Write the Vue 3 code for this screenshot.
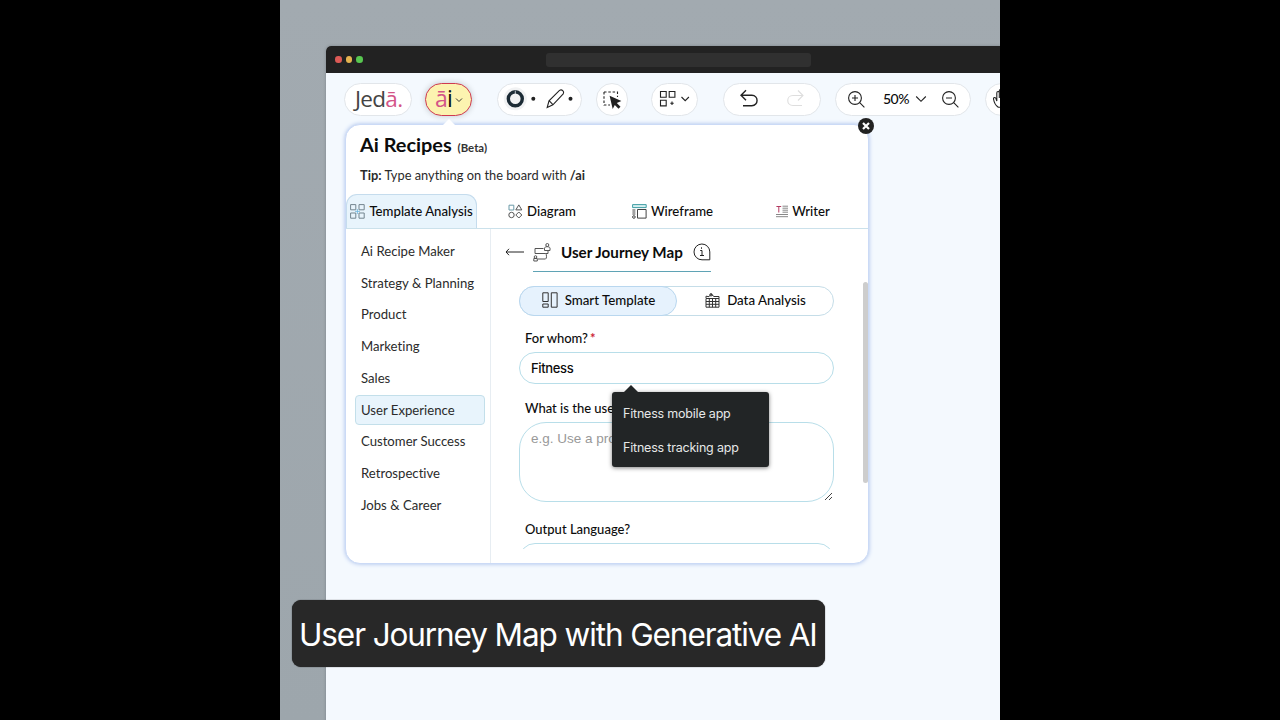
<template>
    <div class="page">
        <div class="stage">
            <div class="browser">
                <div class="title-bar">
                    <i class="dot red"></i><i class="dot yellow"></i><i class="dot green"></i>
                    <div class="address"></div>
                </div>

                <div class="toolbar">
                    <div class="pill jeda">Jed<b>ā.</b></div>
                    <div class="pill ai">
                        <span><b>ā</b>i</span>
                        <svg width="8" height="6" viewBox="0 0 8 6"><path d="M1 1.500l3 3 3-3" /></svg>
                    </div>
                    <div class="pill shapes">
                        <svg width="85" height="32" viewBox="0 0 85 32">
                            <circle cx="18.300" cy="15.800" r="11.500" fill="#f1f2f3" stroke="none" />
                            <circle cx="18.300" cy="15.800" r="7" stroke="#1c2b35" stroke-width="3.400" />
                            <path d="M18.300 7.500v3.500" stroke="#dfe5e8" stroke-width=".8" />
                            <circle cx="36.300" cy="15.800" r="2" fill="#222" stroke="none" />
                            <path d="M50.200 24.500l1.800-6.700L62.500 7.400c2.300-1.500 5.200 1 3.700 3.600L55.900 21.800zM52.100 17.700l3.800 4" stroke-width="1.100" />
                            <circle cx="73.500" cy="15.800" r="2" fill="#222" stroke="none" />
                        </svg>
                    </div>
                    <div class="pill select">
                        <svg width="32" height="32" viewBox="0 0 32 32">
                            <path d="M8 8h13.500v5M8 8v13h6" stroke-width="1.100" stroke-dasharray="2.500 1.800" />
                            <path d="M13.600 11.800l11.800 5.300-4.600 2 3.700 3.600-2 2-3.700-3.700-2.100 4z" fill="#222" stroke="none" />
                        </svg>
                    </div>
                    <div class="pill blocks">
                        <svg width="46" height="32" viewBox="0 0 46 32">
                            <path d="M9.500 8.500h5.700v5.700H9.500zM18.200 8.500h5.700v5.700h-5.700zM9.500 17.200h5.700v5.700H9.500zM19.300 20.300h3.400M21 18.600v3.400" />
                            <path d="M30.500 14l3.700 3.700 3.700-3.700" />
                        </svg>
                    </div>
                    <div class="pill history">
                        <svg width="98" height="32" viewBox="0 0 98 32">
                            <path d="M23 7.200l-5 5 5 5M18.300 12.200h10.500c7 0 7 10.500 0 10.500H20" stroke-width="1.400" />
                            <path d="M75 7.500l5 5-5 5M80 12.500h-10c-7 0-7 10 0 10h9" stroke="#dedede" />
                        </svg>
                    </div>
                    <div class="pill zoom">
                        <svg width="17" height="17" viewBox="0 0 17 17"><circle cx="7" cy="7" r="6.400" /><path d="M11.700 11.700l4.700 4.700M4 7h6M7 4v6" /></svg>
                        <span class="percent">50%</span>
                        <svg class="chev" width="12" height="8" viewBox="0 0 12 8"><path d="M1.200 1.500l4.800 4.800 4.800-4.800" /></svg>
                        <svg width="17" height="17" viewBox="0 0 17 17"><circle cx="7" cy="7" r="6.400" /><path d="M11.700 11.700l4.700 4.700M4 7h6" /></svg>
                    </div>
                    <div class="pill hand">
                        <svg width="24" height="20" viewBox="0 0 24 20"><path d="M5 18c-3-2-4-5-4.500-8 0-2 2.200-2 2.600 0l.7 2V4c0-2 2.500-2 2.500 0v5V2c0-2 2.500-2 2.500 0v7V3c0-2 2.500-2 2.500 0v8c3-2 4 0 2 3s-5 5-9 4z" /></svg>
                    </div>
                </div>

                <div class="panel">
                    <span class="pointer"></span>
                    <button class="close">
                        <svg width="16" height="16" viewBox="0 0 16 16"><path d="M5 5l6 6M11 5l-6 6" /></svg>
                    </button>

                    <div class="panel-head">
                        <h1>Ai Recipes <small>(Beta)</small></h1>
                        <p><b>Tip:</b> Type anything on the board with <b>/ai</b></p>
                    </div>

                    <div class="tabs">
                        <div class="tab active">
                            <svg width="15" height="15" viewBox="0 0 15 15" stroke="#73858f">
                                <path d="M.6.6h5.200v5.200H.6zM9 .6h5.200v5.200H9zM.6 9h5.200v5.200H.6zM9 9h5.200v5.200H9z" />
                                <path d="M7.400 5v5M5 7.400h5" stroke="#6fb6dc" stroke-width=".8" />
                            </svg>
                            <span>Template Analysis</span>
                        </div>
                        <div class="tab">
                            <svg width="15" height="15" viewBox="0 0 15 15" stroke="#555">
                                <path d="M1 1.200h4.800V6H1z" stroke="#6b9aa8" />
                                <path d="M10.800.9l3 5h-6z" />
                                <circle cx="3.500" cy="11" r="2.700" /><path d="M10.800 8l3 3-3 3-3-3z" stroke-linejoin="round" />
                            </svg>
                            <span>Diagram</span>
                        </div>
                        <div class="tab">
                            <svg width="15" height="15" viewBox="0 0 15 15" stroke="#444">
                                <path d="M.6.6h13.600v3H.6z" stroke="#3f9da4" fill="#d7f0f0" />
                                <path d="M5.500 5.500h8.600v8.600H5.500z" />
                                <path d="M.4 6h3M.4 8h3M.4 10h3" /><circle cx="1.900" cy="13" r="1.300" />
                            </svg>
                            <span>Wireframe</span>
                        </div>
                        <div class="tab">
                            <svg width="12" height="13" viewBox="0 0 12 13" stroke="#888">
                                <path d="M.4 1.500h4.800M2.800 1.500v6" stroke="#b33b61" />
                                <path d="M6.500 1.200H12M6.500 3.200H12M6.500 5.200H12M6.500 7.200H12M0 9.500h12M0 11.700h12" />
                            </svg>
                            <span>Writer</span>
                        </div>
                    </div>

                    <div class="panel-body">
                        <ul class="menu">
                            <li v-for="item in menu" :key="item" :class="{ selected: item === current }" @click="current = item">{{ item }}</li>
                        </ul>

                        <div class="content">
                            <div class="heading">
                                <svg class="back" width="20" height="8" viewBox="0 0 20 8"><path d="M4 .8L1 4l3 3.200M1 4h18" /></svg>
                                <div class="heading-title">
                                    <svg width="19" height="19" viewBox="0 0 19 19" stroke="#555">
                                        <path d="M10.500 5.500H2v5h10.500c1.200 0 1.500 5.500 0 5.500H5M12.500 10.500H15V8" />
                                        <circle cx="14.300" cy="2" r="1.500" /><path d="M11.500 7.500V5.200c0-2 5.500-2 5.500 0v2.300z" />
                                        <circle cx="2.500" cy="14" r="1.300" /><path d="M.8 18v-2.500h3.500V18z" />
                                    </svg>
                                    <strong>User Journey Map</strong>
                                    <svg class="info" width="18" height="18" viewBox="0 0 18 18">
                                        <path d="M16.800 16.800H9a7.900 7.900 0 1 1 7.800-7.900z" />
                                        <path d="M7.200 7.500H9v5M7 12.500h4M8.500 4.300v1.500" />
                                    </svg>
                                </div>
                            </div>

                            <div class="switch">
                                <div class="option on">
                                    <svg width="16" height="16" viewBox="0 0 16 16"><path d="M.8.8h5.400v8.700H.8zM.8 12h5.400v3.200H.8zM9.300.8h5.800v14.400H9.300z" /></svg>
                                    <span>Smart Template</span>
                                </div>
                                <div class="option">
                                    <svg width="15" height="15" viewBox="0 0 15 15"><path d="M1 5.500h13v8.700H1zM1 8.500h13M1 11.300h13M4.300 5.500v8.700M7.500 5.500v8.700M10.700 5.500v8.700M1 5V3.200l3 .5 2-2.500 3 2.300h5v2" /><circle cx="6" cy="1.800" r="1.200" /></svg>
                                    <span>Data Analysis</span>
                                </div>
                            </div>

                            <label>For whom?<em>*</em></label>
                            <div class="field">Fitness
                                <div class="suggestions">
                                    <div v-for="s in suggestions" :key="s">{{ s }}</div>
                                </div>
                            </div>
                            <label class="second">What is the user</label>
                            <div class="area">e.g. Use a prod
                                <svg width="9" height="9" viewBox="0 0 9 9"><path d="M1 8l7-7M5 8l3-3" /></svg>
                            </div>
                            <label class="third">Output Language?</label>
                            <div class="clip"><div class="field"></div></div>
                        </div>
                        <div class="scrollbar"></div>
                    </div>
                </div>
            </div>
            <div class="caption">User Journey Map with Generative AI</div>
        </div>
    </div>
</template>

<script setup>
import { ref } from 'vue'

const current = ref('User Experience')

const menu = [
    'Ai Recipe Maker',
    'Strategy & Planning',
    'Product',
    'Marketing',
    'Sales',
    'User Experience',
    'Customer Success',
    'Retrospective',
    'Jobs & Career'
]

const suggestions = ['Fitness mobile app', 'Fitness tracking app']
</script>

<style>
body {
    margin: 0;
    background: #000;
}
</style>

<style scoped>
* {
    box-sizing: border-box;
}

svg {
    display: block;
    flex: none;
    fill: none;
}

.page {
    height: 720px;
    display: flex;
    justify-content: center;
    background: #000;
    font-family: Lato, "Liberation Sans", sans-serif;
    font-variant-ligatures: none;
    color: #0c0c0c;
}

.stage {
    position: relative;
    width: 720px;
    height: 720px;
    padding: 46px 0 0 46px;
    overflow: hidden;
    background: linear-gradient(180deg, #a2aab0, #9da6ac);
}

.browser {
    width: 760px;
    height: 700px;
    background: #f4f9fe;
    border-radius: 5px 0 0 0;
    box-shadow: 0 0 3px rgba(50, 60, 70, 0.35);
}

.title-bar {
    height: 27px;
    display: flex;
    align-items: center;
    gap: 4.200px;
    padding-left: 9px;
    background: #222;
    border-radius: 5px 0 0 0;
}

.dot {
    width: 6.500px;
    height: 6.500px;
    border-radius: 50%;
}

.red { background: #dc5a56; }
.yellow { background: #e5b350; }
.green { background: #58c750; }

.address {
    width: 265px;
    height: 14px;
    margin-left: 179px;
    border-radius: 3px;
    background: #303030;
}

.toolbar {
    display: flex;
    padding: 10px 0 0 18px;
    height: 51px;
}

.pill {
    flex: none;
    display: flex;
    align-items: center;
    height: 33px;
    border: 1px solid #e2e6ea;
    border-radius: 17px;
    background: #fff;
}

.pill svg {
    position: relative;
    top: -0.500px;
    stroke: #222;
    stroke-width: 1.100;
}

.pill b {
    color: #d35488;
    font-weight: 400;
}

.jeda {
    width: 68px;
    padding: 0 0 2px 10px;
    font: 400 22.500px "Open Sans", sans-serif;
    letter-spacing: -0.700px;
    color: #444;
}

.ai {
    width: 47px;
    margin-left: 13px;
    padding: 0 0 3px 9px;
    border: 1.500px solid #cf3a50;
    background: #fcf3b0;
    font: 400 23px "Open Sans", sans-serif;
    letter-spacing: -0.700px;
    box-shadow: 0 0 6px rgba(0, 0, 0, 0.2);
}

.ai svg {
    margin: 5px 0 0 3px;
    stroke-width: 0.900;
}

.shapes { width: 85px; margin-left: 25px; }
.select { width: 32px; margin-left: 14px; }
.blocks { width: 47px; margin-left: 23px; }
.history { width: 98px; margin-left: 25px; }
.shapes svg, .select svg, .blocks svg, .history svg { margin-left: -1px; }
.select svg { margin-top: 1px; }

.zoom {
    width: 136px;
    margin-left: 14px;
    padding-left: 11.500px;
}

.percent {
    width: 27px;
    margin: -2px 0 0 18.500px;
    font-size: 14px;
    font-weight: 500;
    letter-spacing: -0.500px;
}

.chev {
    margin: 0 15px 0 5px;
}

.hand {
    width: 60px;
    margin-left: 14px;
    padding-left: 7px;
}

.panel {
    position: relative;
    width: 524px;
    height: 440px;
    margin-left: 19px;
    border: 1px solid #cbdaf6;
    border-radius: 15px;
    background: #fff;
    box-shadow: 0 0 4px #a9bfeb;
}

.pointer {
    position: absolute;
    left: 97px;
    top: -6px;
    border: 6px solid transparent;
    border-top: 0;
    border-bottom: 6px solid #fff;
}

.close {
    position: absolute;
    right: -6px;
    top: -7px;
    width: 16px;
    height: 16px;
    padding: 0;
    border: 0;
    border-radius: 50%;
    background: #222;
}

.close svg {
    stroke: #fff;
    stroke-width: 2.200;
}

.panel-head {
    height: 69px;
    padding: 6px 0 0 14px;
}

h1 {
    margin: 0;
    font-size: 19.900px;
    line-height: 26px;
    font-weight: 700;
}

small {
    margin-left: 1px;
    font-size: 11.400px;
    color: #333;
}

p {
    margin: 5px 0 0;
    font-size: 12.840px;
    line-height: 18px;
    color: #2b2b2b;
}

.tabs {
    display: grid;
    grid-template-columns: 131px 130px 131px 1fr;
    height: 35px;
    border-bottom: 1px solid #cbe1eb;
}

.tab {
    display: flex;
    align-items: center;
    justify-content: center;
    gap: 4px;
    font-size: 13.200px;
    font-weight: 500;
    white-space: nowrap;
}

.active {
    padding-bottom: 1px;
    border: 1px solid #c5dced;
    border-bottom: 0;
    border-radius: 11px 11px 0 0;
    background: #e8f4fc;
}

.panel-body {
    display: flex;
    height: 334px;
}

.menu {
    width: 145px;
    margin: 0;
    padding: 7px 5px 0 9px;
    border-right: 1px solid #e7edf2;
    list-style: none;
}

.menu li {
    display: flex;
    align-items: center;
    height: 30px;
    margin-bottom: 1.800px;
    padding: 0 0 0.600px 5px;
    border: 1px solid transparent;
    border-radius: 4px;
    font-size: 13.150px;
    color: #2b2b2b;
}

.menu li.selected {
    border-color: #c3dfea;
    background: #e8f4fc;
}

.content {
    width: 344px;
    padding: 8px 0 0 14px;
}

.heading {
    display: flex;
}

.back {
    margin-top: 11px;
    stroke: #222;
}

.heading-title {
    display: flex;
    align-items: center;
    width: 178px;
    height: 35px;
    padding-bottom: 4px;
    margin-left: 8px;
    border-bottom: 1.500px solid #5fa3b5;
}

.heading-title strong {
    width: 122px;
    margin-left: 9px;
    font-size: 15.200px;
    white-space: nowrap;
}

.info {
    margin-left: 9.500px;
    stroke: #222;
}

.switch {
    display: flex;
    width: 315px;
    height: 30px;
    margin: 14px 0 0 14px;
    border: 1px solid #c5dde8;
    border-radius: 15px;
}

.option {
    display: flex;
    flex: 1;
    align-items: center;
    justify-content: center;
    gap: 7px;
    padding: 0 0 2px 1px;
    font-size: 13.300px;
    font-weight: 500;
}

.option svg {
    stroke: #333;
}

.on {
    margin: -1px 0 -1px -1px;
    border: 1px solid #b9d7ef;
    border-radius: 15px;
    background: #e6f2fd;
}

label {
    display: block;
    margin: 13px 0 0 20px;
    font-size: 13px;
    font-weight: 500;
    line-height: 18px;
}

label em {
    margin-left: 2px;
    color: #cc1f36;
    font-style: normal;
    font-weight: 700;
}

.field {
    position: relative;
    width: 315px;
    height: 32px;
    margin: 5px 0 0 14px;
    padding-left: 11px;
    border: 1px solid #b8dee9;
    border-radius: 16px;
    font: 500 13px/31px Inter, sans-serif;
    letter-spacing: -0.350px;
}

.suggestions {
    position: absolute;
    left: 92px;
    top: 39px;
    z-index: 2;
    width: 157px;
    height: 75px;
    padding: 5px 11px;
    border-radius: 3px;
    background: #222526;
    box-shadow: 0 1px 4px rgba(0, 0, 0, 0.5);
    color: #e6e8e8;
    font: 400 12.500px/34px Inter, sans-serif;
    letter-spacing: -0.200px;
}

.suggestions::before {
    content: "";
    position: absolute;
    left: 11px;
    top: -7px;
    border: 8px solid transparent;
    border-top: 0;
    border-bottom: 8px solid #222526;
}

label.second {
    margin-top: 15px;
}

.area {
    position: relative;
    width: 315px;
    height: 80px;
    margin: 5px 0 0 14px;
    padding: 7px 11px;
    border: 1px solid #b8dee9;
    border-radius: 27px;
    color: #999;
    font: 400 13.500px/18px "Liberation Sans", sans-serif;
}

.area svg {
    position: absolute;
    right: 0;
    bottom: 0;
    stroke: #444;
}

label.third {
    margin-top: 18px;
}

.clip {
    height: 6px;
    margin-top: 5px;
    overflow: hidden;
}

.clip .field {
    margin-top: 0;
}

.scrollbar {
    width: 5px;
    height: 201px;
    margin: 53px 0 0 28px;
    border-radius: 3px;
    background: #cdcdcd;
}

.caption {
    position: absolute;
    left: 12px;
    top: 600px;
    width: 533px;
    height: 67px;
    padding-left: 7px;
    border-radius: 9px;
    background: #282828;
    box-shadow: 0 0 1px #111;
    color: #fff;
    font: 400 31.500px/69px Inter, sans-serif;
    letter-spacing: -1.100px;
    white-space: nowrap;
}
</style>
